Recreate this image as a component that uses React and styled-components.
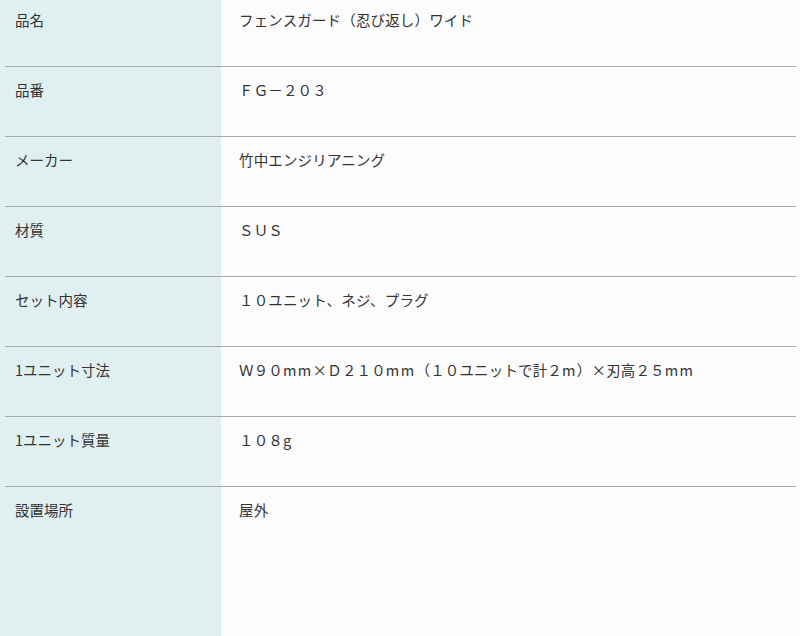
import React from 'react';
import styled, { createGlobalStyle } from 'styled-components';

const GlobalStyle = createGlobalStyle`
  html, body {
    margin: 0;
    padding: 0;
  }
  body {
    font-family: "Noto Sans CJK JP", "Noto Sans", sans-serif;
    color: #333;
  }
`;

const Page = styled.div`
  min-height: 100vh;
  display: flex;
  flex-direction: column;
  background: linear-gradient(to right, #e0efef 0, #e0efef 221px, #fcfcfc 221px);
`;

const Row = styled.div`
  display: grid;
  grid-template-columns: 216px 1fr;
  margin: 0 4px 0 5px;
  height: 70px;
  box-sizing: border-box;
  border-bottom: 1px solid #aaa;
  padding-top: 12px;

  &:first-child {
    height: 67px;
    padding-top: 9px;
  }

  &:last-child {
    flex: 1;
    border-bottom: none;
  }
`;

const Label = styled.div`
  padding-left: 10px;
  font-size: 14.5px;
  line-height: 22px;
`;

const Value = styled.div`
  padding-left: 18px;
  font-size: 14.5px;
  line-height: 22px;
  letter-spacing: 0.15px;
`;

// Latin runs in the reference are set a little looser than the CJK glyphs
const Latin = styled.span`
  letter-spacing: 1.4px;
`;

const specs = [
  ['品名', 'フェンスガード（忍び返し）ワイド'],
  ['品番', 'ＦＧ－２０３'],
  ['メーカー', '竹中エンジリアニング'],
  ['材質', 'ＳＵＳ'],
  ['セット内容', '１０ユニット、ネジ、プラグ'],
  ['1ユニット寸法', 'Ｗ９０mm×Ｄ２１０mm（１０ユニットで計２m）×刃高２５mm'],
  ['1ユニット質量', '１０８g'],
  ['設置場所', '屋外'],
];

const renderValue = value =>
  value.split(/([a-z]+)/).map((part, i) =>
    /^[a-z]+$/.test(part) ? <Latin key={i}>{part}</Latin> : part
  );

const App = () => (
  <>
    <GlobalStyle />
    <Page>
      {specs.map(([label, value]) => (
        <Row key={label}>
          <Label>{label}</Label>
          <Value>{renderValue(value)}</Value>
        </Row>
      ))}
    </Page>
  </>
);

export default App;
